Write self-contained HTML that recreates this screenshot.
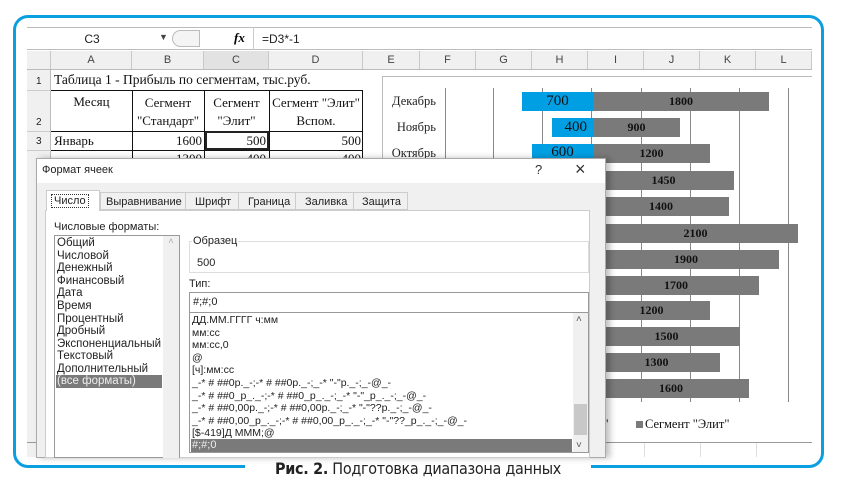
<!DOCTYPE html>
<html><head><meta charset="utf-8"><style>
*{margin:0;padding:0;box-sizing:border-box}
body{width:841px;height:493px;background:#fff;position:relative;overflow:hidden;font-family:"Liberation Sans","DejaVu Sans",sans-serif}
.a{position:absolute}
.s{font-family:"Liberation Serif",serif;color:#111}
.t{font-family:"Liberation Sans","DejaVu Sans",sans-serif;font-size:10px;color:#222}
.hd{position:absolute;top:51px;height:18px;border-right:1px solid #c8c8c8;font-size:11px;color:#444;text-align:center;line-height:18px;background:#f0f0f0}
.bar{position:absolute;height:19px;font-family:"Liberation Serif",serif;text-align:center;line-height:19px;color:#111}
.g{background:#7a7a7a;font-weight:bold;font-size:12px}
.b{background:#009fe3;font-size:15px}
.lbl{position:absolute;left:384px;width:52px;text-align:right;font-family:"Liberation Serif",serif;font-size:12.5px;color:#222}
</style></head><body>
<div class="a" style="left:13px;top:15px;width:811px;height:453px;border:3px solid #0aa0e0;border-radius:15px"></div>
<div class="a" style="left:245px;top:460px;width:346px;height:12px;background:#fff"></div>
<div class="a" style="left:248px;top:459px;width:340px;text-align:center;font-size:16px;color:#222;font-family:'DejaVu Sans Condensed','DejaVu Sans',sans-serif;letter-spacing:-0.3px"><b>Рис. 2.</b> Подготовка диапазона данных</div>

<div class="a" style="left:27px;top:27px;width:785px;height:430px;background:#fff;overflow:hidden">
 <div class="a" style="left:0;top:0;width:785px;height:23px;border-top:1px solid #bbb;border-bottom:1px solid #bbb;background:#fff"></div>
 <div class="a" style="left:0;top:5px;width:130px;text-align:center;font-size:12px;color:#222">C3</div>
 <div class="a" style="left:132px;top:5px;font-size:9px;color:#444">▼</div>
 <div class="a" style="left:145px;top:3px;width:28px;height:17px;border:1px solid #bbb;border-radius:9px 0 0 9px;background:#f4f4f4"></div>
 <div class="a" style="left:207px;top:3px;font-family:'Liberation Serif',serif;font-style:italic;font-weight:bold;font-size:13px">fx</div>
 <div class="a" style="left:226px;top:0;width:1px;height:23px;background:#ccc"></div>
 <div class="a" style="left:235px;top:5px;font-size:12px;color:#222">=D3*-1</div>
 <div class="a" style="left:0;top:24px;width:785px;height:18px;background:#f0f0f0;border-bottom:1px solid #bbb"></div>
</div>
<div class="hd" style="left:27px;width:24px"></div>
<div class="hd" style="left:51px;width:81px">A</div>
<div class="hd" style="left:132px;width:72px">B</div>
<div class="hd" style="left:204px;width:65px;background:#e2e2e2">C</div>
<div class="hd" style="left:269px;width:94px">D</div>
<div class="hd" style="left:363px;width:57px">E</div>
<div class="hd" style="left:420px;width:56px">F</div>
<div class="hd" style="left:476px;width:56px">G</div>
<div class="hd" style="left:532px;width:56px">H</div>
<div class="hd" style="left:588px;width:56px">I</div>
<div class="hd" style="left:644px;width:56px">J</div>
<div class="hd" style="left:700px;width:56px">K</div>
<div class="hd" style="left:756px;width:56px">L</div>
<div class="a" style="left:27px;top:69px;width:24px;height:388px;background:#f0f0f0;border-right:1px solid #bbb"></div>
<div class="a" style="left:27px;top:69px;width:785px;height:1px;background:#bbb"></div>
<div class="a t" style="left:36px;top:76px">1</div>
<div class="a t" style="left:36px;top:117px">2</div>
<div class="a t" style="left:36px;top:136px">3</div>
<div class="a" style="left:27px;top:90px;width:24px;height:1px;background:#ccc"></div>
<div class="a" style="left:27px;top:131px;width:24px;height:1px;background:#ccc"></div>
<div class="a" style="left:27px;top:150px;width:24px;height:1px;background:#ccc"></div>
<div class="a s" style="left:54px;top:72px;font-size:13.5px">Таблица 1 - Прибыль по сегментам, тыс.руб.</div>
<div class="a" style="left:51px;top:90px;width:312px;height:80px;border-top:1px solid #111"></div>
<div class="a" style="left:132px;top:90px;width:1px;height:70px;background:#111"></div>
<div class="a" style="left:204px;top:90px;width:1px;height:70px;background:#111"></div>
<div class="a" style="left:269px;top:90px;width:1px;height:70px;background:#111"></div>
<div class="a" style="left:362px;top:90px;width:1px;height:70px;background:#111"></div>
<div class="a" style="left:51px;top:131px;width:312px;height:1px;background:#111"></div>
<div class="a" style="left:51px;top:150px;width:312px;height:1px;background:#111"></div>
<div class="a s" style="left:51px;top:94px;width:81px;text-align:center;font-size:13px">Месяц</div>
<div class="a s" style="left:132px;top:94px;width:72px;text-align:center;font-size:13px;line-height:18px">Сегмент<br>"Стандарт"</div>
<div class="a s" style="left:204px;top:94px;width:65px;text-align:center;font-size:13px;line-height:18px">Сегмент<br>"Элит"</div>
<div class="a s" style="left:269px;top:94px;width:94px;text-align:center;font-size:13px;line-height:18px">Сегмент "Элит"<br>Вспом.</div>
<div class="a s" style="left:54px;top:133px;font-size:13px">Январь</div>
<div class="a s" style="left:132px;top:133px;width:70px;text-align:right;font-size:13px">1600</div>
<div class="a" style="left:205px;top:131px;width:64px;height:19px;border:2px solid #222"></div>
<div class="a s" style="left:204px;top:133px;width:62px;text-align:right;font-size:13px">500</div>
<div class="a s" style="left:269px;top:133px;width:92px;text-align:right;font-size:13px">500</div>
<div class="a s" style="left:132px;top:151px;width:70px;text-align:right;font-size:13px">1300</div>
<div class="a s" style="left:204px;top:151px;width:62px;text-align:right;font-size:13px">400</div>
<div class="a s" style="left:269px;top:151px;width:92px;text-align:right;font-size:13px">400</div>

<div class="a" style="left:382px;top:76px;width:430px;height:366px;border-left:1px solid #bbb;border-top:1px solid #bbb;background:#fff"></div>
<div class="a" style="left:27px;top:442px;width:785px;height:1px;background:#999"></div>
<div class="a" style="left:644px;top:443px;width:1px;height:14px;background:#ddd"></div>
<div class="a" style="left:700px;top:443px;width:1px;height:14px;background:#ddd"></div>
<div class="a" style="left:756px;top:443px;width:1px;height:14px;background:#ddd"></div>
<div class="a" style="left:445px;top:88px;width:1px;height:314px;background:#888"></div>
<div class="a" style="left:493px;top:88px;width:1px;height:314px;background:#888"></div>
<div class="a" style="left:542px;top:88px;width:1px;height:314px;background:#888"></div>
<div class="a" style="left:591px;top:88px;width:1px;height:314px;background:#888"></div>
<div class="a" style="left:641px;top:88px;width:1px;height:314px;background:#888"></div>
<div class="a" style="left:690px;top:88px;width:1px;height:314px;background:#888"></div>
<div class="a" style="left:739px;top:88px;width:1px;height:314px;background:#888"></div>
<div class="a" style="left:788px;top:88px;width:1px;height:314px;background:#888"></div>
<div class="lbl" style="top:94px">Декабрь</div>
<div class="lbl" style="top:120px">Ноябрь</div>
<div class="lbl" style="top:146px">Октябрь</div>
<div class="bar b" style="left:522px;top:92px;width:71px">700</div>
<div class="bar b" style="left:552px;top:118px;width:41px;text-align:right;padding-right:6px">400</div>
<div class="bar b" style="left:532px;top:144px;width:61px;line-height:16px">600</div>
<div class="bar g" style="left:593px;top:92px;width:176px">1800</div>
<div class="bar g" style="left:593px;top:118px;width:87px">900</div>
<div class="bar g" style="left:593px;top:144px;width:117px">1200</div>
<div class="bar g" style="left:593px;top:171px;width:141px">1450</div>
<div class="bar g" style="left:593px;top:197px;width:136px">1400</div>
<div class="bar g" style="left:593px;top:224px;width:205px">2100</div>
<div class="bar g" style="left:593px;top:250px;width:186px">1900</div>
<div class="bar g" style="left:593px;top:276px;width:166px">1700</div>
<div class="bar g" style="left:593px;top:301px;width:117px">1200</div>
<div class="bar g" style="left:593px;top:327px;width:147px">1500</div>
<div class="bar g" style="left:593px;top:353px;width:127px">1300</div>
<div class="bar g" style="left:593px;top:379px;width:156px">1600</div>
<div class="a s" style="left:592px;top:417px;font-size:12.5px">от"</div>
<div class="a" style="left:636px;top:421px;width:7px;height:7px;background:#7a7a7a"></div>
<div class="a s" style="left:645px;top:417px;font-size:12.5px">Сегмент "Элит"</div>

<div class="a" style="left:36px;top:158px;width:570px;height:300px;background:#f0f0f0;border:1px solid #aaa;box-shadow:4px 0 6px rgba(0,0,0,0.25)"></div>
<div class="a" style="left:37px;top:159px;width:568px;height:24px;background:#fff"></div>
<div class="a t" style="left:42px;top:164px;font-size:11px">Формат ячеек</div>
<div class="a" style="left:535px;top:162px;font-size:13px;color:#333">?</div>
<div class="a" style="left:575px;top:159px;font-size:18px;color:#333">×</div>
<div class="a" style="left:45px;top:210px;width:545px;height:248px;background:#fff;border:1px solid #ccc"></div>
<div class="a" style="left:46px;top:190px;width:54px;height:21px;background:#fff;border:1px solid #ccc;border-bottom:none"></div>
<div class="a t" style="left:51px;top:194px;border:1px dotted #333;padding:0 2px;font-size:11px">Число</div>
<div class="a" style="left:100px;top:192px;width:308px;height:18px;border:1px solid #ccc;background:#f0f0f0"></div>
<div class="a t" style="left:106px;top:196px;font-size:11px">Выравнивание</div>
<div class="a" style="left:185px;top:192px;width:1px;height:18px;background:#ccc"></div>
<div class="a t" style="left:195px;top:196px;font-size:11px">Шрифт</div>
<div class="a" style="left:238px;top:192px;width:1px;height:18px;background:#ccc"></div>
<div class="a t" style="left:248px;top:196px;font-size:11px">Граница</div>
<div class="a" style="left:295px;top:192px;width:1px;height:18px;background:#ccc"></div>
<div class="a t" style="left:305px;top:196px;font-size:11px">Заливка</div>
<div class="a" style="left:353px;top:192px;width:1px;height:18px;background:#ccc"></div>
<div class="a t" style="left:362px;top:196px;font-size:11px">Защита</div>
<div class="a t" style="left:54px;top:221px;font-size:11px">Числовые форматы:</div>
<div class="a" style="left:54px;top:235px;width:126px;height:223px;border:1px solid #999;background:#fff"></div>
<div class="a" style="left:163px;top:236px;width:16px;height:222px;background:#f0f0f0;color:#aaa;font-size:9px;text-align:center">˄</div>
<div class="a t" style="left:57px;top:237px;font-size:11.5px;line-height:12.6px">Общий<br>Числовой<br>Денежный<br>Финансовый<br>Дата<br>Время<br>Процентный<br>Дробный<br>Экспоненциальный<br>Текстовый<br>Дополнительный</div>
<div class="a t" style="left:56px;top:375px;width:106px;height:13px;background:#7a7a7a;color:#eee;font-size:11.5px;padding-left:1px;line-height:13px">(все форматы)</div>
<div class="a" style="left:189px;top:241px;width:400px;height:32px;border:1px solid #ddd"></div>
<div class="a t" style="left:192px;top:235px;background:#fff;padding:0 1px;font-size:11px">Образец</div>
<div class="a t" style="left:197px;top:257px;font-size:11px">500</div>
<div class="a t" style="left:189px;top:278px;font-size:11px">Тип:</div>
<div class="a" style="left:189px;top:292px;width:400px;height:21px;border:1px solid #999;background:#fff"></div>
<div class="a t" style="left:193px;top:296px;font-size:11px">#;#;0</div>
<div class="a" style="left:189px;top:312px;width:400px;height:141px;border:1px solid #999;background:#fff"></div>
<div class="a" style="left:573px;top:313px;width:15px;height:139px;background:#f0f0f0"></div>
<div class="a" style="left:574px;top:404px;width:13px;height:31px;background:#c8c8c8"></div>
<div class="a" style="left:576px;top:314px;font-size:10px;color:#555">˄</div>
<div class="a" style="left:576px;top:440px;font-size:10px;color:#555">˅</div>
<div class="a t" style="left:192px;top:314px;font-size:10.5px;line-height:12.6px;white-space:pre">ДД.ММ.ГГГГ ч:мм
мм:сс
мм:сс,0
@
[ч]:мм:сс
_-* # ##0р._-;-* # ##0р._-;_-* "-"р._-;_-@_-
_-* # ##0_р_._-;-* # ##0_р_._-;_-* "-"_р_._-;_-@_-
_-* # ##0,00р._-;-* # ##0,00р._-;_-* "-"??р._-;_-@_-
_-* # ##0,00_р_._-;-* # ##0,00_р_._-;_-* "-"??_р_._-;_-@_-
[$-419]Д МММ;@</div>
<div class="a t" style="left:191px;top:439px;width:381px;height:13px;background:#7a7a7a;color:#eee;font-size:11px;padding-left:1px;line-height:13px">#;#;0</div>
</body></html>
